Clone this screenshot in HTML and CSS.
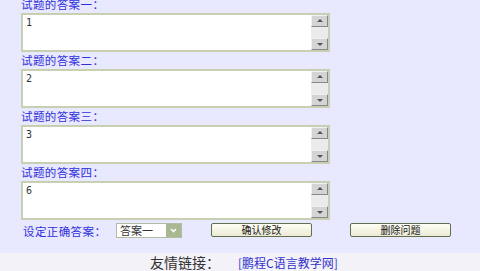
FILE: index.html
```html
<!DOCTYPE html>
<html>
    <head>
        <title>修改问题</title>
<link rel="stylesheet" href="styles.css">
    </head>

    <body>
        <div id="content">
            <div class="answer">
                <div class="answer-label">试题的答案一：</div>
                <div class="answer-box">
                    <textarea class="answer-text">1</textarea>
                    <div class="scrollbar"><span class="sb-btn up"></span><span class="sb-track"></span><span class="sb-btn down"></span></div>
                </div>
            </div>
            <div class="answer">
                <div class="answer-label">试题的答案二：</div>
                <div class="answer-box">
                    <textarea class="answer-text">2</textarea>
                    <div class="scrollbar"><span class="sb-btn up"></span><span class="sb-track"></span><span class="sb-btn down"></span></div>
                </div>
            </div>
            <div class="answer">
                <div class="answer-label">试题的答案三：</div>
                <div class="answer-box">
                    <textarea class="answer-text">3</textarea>
                    <div class="scrollbar"><span class="sb-btn up"></span><span class="sb-track"></span><span class="sb-btn down"></span></div>
                </div>
            </div>
            <div class="answer">
                <div class="answer-label">试题的答案四：</div>
                <div class="answer-box">
                    <textarea class="answer-text">6</textarea>
                    <div class="scrollbar"><span class="sb-btn up"></span><span class="sb-track"></span><span class="sb-btn down"></span></div>
                </div>
            </div>
            <div class="action-row">
                <span class="row-label">设定正确答案：</span>
                <div class="select-box">
                    <span class="select-value">答案一</span>
                    <span class="select-arrow"><svg width="11" height="11" viewBox="0 0 11 11"><path d="M3 4 L5.5 6.5 L8 4" fill="none" stroke="#fff" stroke-width="1.6"/></svg></span>
                </div>
                <button class="form-btn confirm">确认修改</button>
                <button class="form-btn delete">删除问题</button>
            </div>
        </div>
        <div id="footer">
            <span class="footer-title">友情链接：</span>
            <a class="footer-link" href="#">[鹏程C语言教学网]</a>
        </div>
    </body>
</html>
```

FILE: styles.css
```css
body {
    margin: 0;
    background-color: #e8e8ff;
    font-family: "Noto Sans CJK SC", "Liberation Sans", sans-serif;
    overflow: hidden;
}

#content {
    margin-top: -4px;
    padding-left: 21px;
    height: 257px;
}

.answer-label {
    height: 16px;
    line-height: 16px;
    font-size: 11.5px;
    letter-spacing: 0.4px;
    color: #3030dd;
    margin-bottom: 1px;
}

.answer-box {
    display: flex;
    width: 305px;
    height: 35px;
    border: 2px solid #c8d0b4;
    background: #fff;
}

.answer-text {
    flex: 1;
    border: none;
    outline: none;
    resize: none;
    overflow: hidden;
    padding: 2px 3px;
    margin: 0;
    font-family: "DejaVu Sans Mono", monospace;
    font-size: 10px;
    color: #333;
    background: #fff;
}

.scrollbar {
    width: 17px;
    display: flex;
    flex-direction: column;
    background: #fff;
}

.sb-btn {
    background: #d4d4d4;
    border: 1px solid;
    border-color: #f0f0f0 #888 #888 #f0f0f0;
    box-sizing: border-box;
    position: relative;
    height: 12px;
}

.sb-btn::after {
    content: "";
    position: absolute;
    left: 5px;
    width: 0;
    height: 0;
    border-left: 3px solid transparent;
    border-right: 3px solid transparent;
}

.sb-btn.up::after {
    top: 3px;
    border-bottom: 3px solid #555;
}

.sb-btn.down::after {
    top: 4px;
    border-top: 3px solid #555;
}

.sb-track {
    flex: 1;
    background-color: #e4e4e4;
    background-image: radial-gradient(#f4f4f4 0.6px, transparent 0.8px);
    background-size: 2px 2px;
}

.action-row {
    display: flex;
    align-items: flex-start;
    margin-top: 3px;
}

.row-label {
    margin-left: 2px;
    width: 93px;
    font-size: 11.5px;
    letter-spacing: 0.4px;
    line-height: 17px;
    color: #3030dd;
}

.select-box {
    display: flex;
    width: 66px;
    height: 15px;
    box-sizing: border-box;
    border: 1px solid #b4bca4;
    background: #fff;
}

.select-value {
    flex: 1;
    font-size: 11px;
    line-height: 13px;
    padding-left: 3px;
    color: #333;
}

.select-arrow {
    width: 15px;
    height: 13px;
    background: #a8b890;
    display: flex;
    align-items: center;
    justify-content: center;
}

.form-btn {
    width: 101px;
    height: 14px;
    padding: 0;
    font-family: "Noto Sans CJK SC", "Liberation Sans", sans-serif;
    font-size: 10px;
    line-height: 12px;
    color: #222;
    background: linear-gradient(#fffff4, #ecead4);
    border: 1px solid #5f7050;
    border-radius: 2px;
    cursor: pointer;
}

.form-btn.confirm {
    margin-left: 29px;
}

.form-btn.delete {
    margin-left: 38px;
}

#footer {
    height: 18px;
    background: #f2f2f8;
    padding-left: 150px;
    display: flex;
    align-items: center;
}

.footer-title {
    font-size: 14px;
    color: #333;
    margin-right: 18px;
}

.footer-link {
    font-size: 12px;
    color: #3333cc;
    text-decoration: none;
}
```
